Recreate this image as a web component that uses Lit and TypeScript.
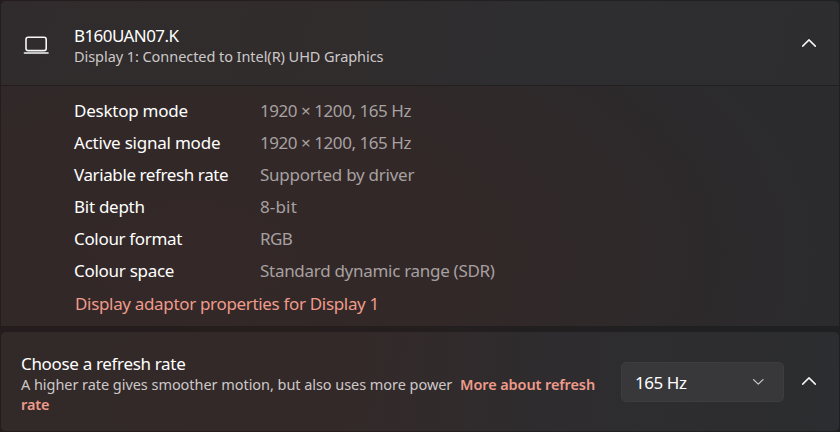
import { LitElement, html, css } from "lit";
import { customElement, property } from "lit/decorators.js";

@customElement("chevron-icon")
class ChevronIcon extends LitElement {
  @property() direction = "up";
  static styles = css`
    :host { display: block; width: 16px; height: 10px; margin-bottom: 3px; }
    :host([direction="down"]) { width: 12px; height: 8px; margin-bottom: 1px; }
    svg { display: block; fill: none; stroke-linecap: round; stroke-linejoin: round; }
    .up { stroke: #f5f5f5; stroke-width: 1.5; }
    .down { stroke: #c4c4c5; stroke-width: 1.3; }
  `;
  render() {
    return this.direction === "down"
      ? html`<svg width="12" height="8" viewBox="0 0 12 8"><path class="down" d="M1.5 1.6 6.3 6.1l4.7-4.5" /></svg>`
      : html`<svg width="16" height="10" viewBox="0 0 16 10"><path class="up" d="M1.7 8.1 8 1.9l6.3 6.2" /></svg>`;
  }
}

interface Row { label: string; value: string; labelGap: number; valueGap: number; }

const rows: Row[] = [
  { label: "Desktop mode", value: "1920 × 1200, 165 Hz", labelGap: -0.24, valueGap: -0.45 },
  { label: "Active signal mode", value: "1920 × 1200, 165 Hz", labelGap: -0.22, valueGap: -0.45 },
  { label: "Variable refresh rate", value: "Supported by driver", labelGap: -0.4, valueGap: -0.25 },
  { label: "Bit depth", value: "8-bit", labelGap: -0.27, valueGap: 0.15 },
  { label: "Colour format", value: "RGB", labelGap: -0.33, valueGap: -0.6 },
  { label: "Colour space", value: "Standard dynamic range (SDR)", labelGap: -0.28, valueGap: -0.29 },
];

@customElement("app-root")
class AppRoot extends LitElement {
  static styles = css`
    :host {
      display: flex; flex-direction: column; gap: 6px; box-sizing: border-box;
      width: 840px; height: 432px; padding: 1px; overflow: hidden;
      background: linear-gradient(90deg, #241c1d 0%, #261d1d 35%, #202022 80%, #1f2022 100%);
      font-family: "Noto Sans", "Open Sans", sans-serif; font-size: 17px; color: #fff;
      white-space: nowrap;
    }
    * { box-sizing: border-box; }
    .card { border-radius: 5px; overflow: hidden; }
    .display { height: 325px; display: flex; flex-direction: column; gap: 1px; border-radius: 5px 5px 0 0; }
    .header {
      height: 84px; display: flex; align-items: center; padding: 4px 22px 0 22px;
      background: linear-gradient(100deg, #302c2d 0%, #312c2c 35%, #2e2d2f 60%, #2d2d2f 100%);
    }
    .header chevron-icon { margin-bottom: 5px; }
    .laptop { width: 26px; height: 20px; display: block; margin-right: 25px; fill: none; stroke: #f7f7f7; }
    .copy { flex: 1; }
    .title { line-height: 22px; height: 22px; }
    .sub { font-size: 14.5px; line-height: 20px; color: #ccc8c8; }
    .name { letter-spacing: -0.58px; line-height: 23px; }
    .connected { letter-spacing: -0.06px; }
    .details {
      flex: 1; padding: 9px 0 0 73px;
      background: radial-gradient(ellipse 640px 340px at 190px 170px, #342828 0%, #322828 45%, #2c2a2c 90%, #2b2b2d 100%);
    }
    .row { display: grid; grid-template-columns: 186px 1fr; height: 32px; line-height: 32px; }
    .value { color: #a7a1a1; }
    .props { display: block; color: #ee9b8b; line-height: 32px; margin: 1px 0 0 1px; letter-spacing: -0.33px; }
    .refresh {
      height: 99px; display: flex; align-items: center; padding: 1px 22px 0 20px;
      background: linear-gradient(96deg, #322929 0%, #342929 40%, #2e2c2e 65%, #2c2d30 100%);
    }
    .refresh .copy { padding-top: 4px; }
    .choose { letter-spacing: -0.33px; line-height: 20px; height: 20px; }
    .desc { letter-spacing: -0.05px; }
    .more { color: #ee9b8b; font-weight: 600; letter-spacing: -0.1px; }
    .lead { margin-left: 4px; }
    .select {
      width: 163px; height: 40px; margin-right: 17px; padding: 0 19px 0 13px;
      display: flex; align-items: center; justify-content: space-between;
      background: #38383b; border: 1px solid #3d3d40; border-radius: 5px; letter-spacing: -0.45px;
    }
  `;
  render() {
    return html`
      <section class="card display">
        <div class="header">
          <svg class="laptop" viewBox="0 0 26 20">
            <rect x="3" y="2.2" width="20.2" height="13.4" rx="2.2" stroke-width="1.6" />
            <path d="M1.4 18h23.6" stroke-width="1.6" stroke-linecap="round" />
          </svg>
          <div class="copy">
            <div class="title name">B160UAN07.K</div>
            <div class="sub connected">Display 1: Connected to Intel(R) UHD Graphics</div>
          </div>
          <chevron-icon></chevron-icon>
        </div>
        <div class="details">
          ${rows.map((r) => html`<div class="row">
            <span style="letter-spacing:${r.labelGap}px">${r.label}</span>
            <span class="value" style="letter-spacing:${r.valueGap}px">${r.value}</span>
          </div>`)}
          <a class="props">Display adaptor properties for Display 1</a>
        </div>
      </section>
      <section class="card refresh">
        <div class="copy">
          <div class="title choose">Choose a refresh rate</div>
          <div class="sub desc">A higher rate gives smoother motion, but also uses more power <a class="more lead">More about refresh</a><br /><a class="more">rate</a></div>
        </div>
        <div class="select"><span>165 Hz</span><chevron-icon direction="down"></chevron-icon></div>
        <chevron-icon></chevron-icon>
      </section>
    `;
  }
}
